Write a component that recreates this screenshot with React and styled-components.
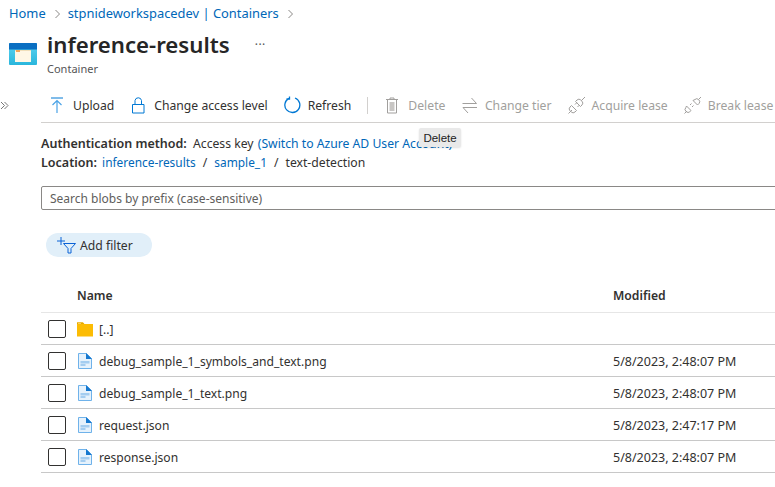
import React from "react";
import styled, { createGlobalStyle } from "styled-components";

const GlobalStyle = createGlobalStyle`
  html, body {
    margin: 0;
    padding: 0;
    background: #fff;
  }
  body {
    width: 775px;
    height: 487px;
    overflow: hidden;
    font-family: "Noto Sans", "Open Sans", sans-serif;
    color: #292827;
  }
`;

const Page = styled.div`
  position: relative;
  width: 775px;
  height: 487px;
  overflow: hidden;
`;

const Breadcrumb = styled.nav`
  display: flex;
  align-items: center;
  height: 26px;
  padding-left: 9px;
  font-size: 12.9px;
  color: #0067b8;
`;

const Crumb = styled.span`
  white-space: nowrap;
`;

const CrumbChevron = styled.svg`
  width: 8px;
  height: 10px;
  margin: 1px 6px 0 8px;
  fill: none;
  stroke: #8a8886;
  stroke-width: 1;
`;

const Header = styled.header`
  display: flex;
  height: 52px;
  padding-left: 9px;
`;

const TitleBlock = styled.div`
  margin-left: 10px;
  padding-top: 3px;
`;

const TitleRow = styled.div`
  display: flex;
  align-items: flex-start;
`;

const Title = styled.h1`
  margin: 0;
  font-size: 22.2px;
  line-height: 32px;
  font-weight: 600;
  color: #262626;
  white-space: nowrap;
`;

const More = styled.span`
  margin: 8px 0 0 25px;
  font-size: 12px;
  line-height: 16px;
  letter-spacing: 0.5px;
  color: #555;
`;

const Subtitle = styled.div`
  font-size: 11px;
  line-height: 15px;
  color: #555;
`;

const ContainerIcon = styled.svg`
  width: 28px;
  height: 22px;
  margin-top: 17px;
`;

const Body = styled.div`
  display: flex;
`;

const Rail = styled.div`
  width: 41px;
  flex: none;
  padding-top: 23px;
`;

const RailChevron = styled.svg`
  display: block;
  width: 9px;
  height: 9px;
  fill: none;
  stroke: #777;
  stroke-width: 1;
`;

const Main = styled.main`
  flex: 1;
  min-width: 0;
`;

const Toolbar = styled.div`
  display: flex;
  align-items: center;
  box-sizing: border-box;
  height: 45px;
  padding-top: 10px;
  border-bottom: 1px solid #d2d0ce;
  white-space: nowrap;
  overflow: hidden;
`;

const ToolButton = styled.div`
  display: flex;
  align-items: center;
  flex: none;
  margin-left: ${(p) => p.$gap}px;
  font-size: 12.2px;
  color: ${(p) => (p.$disabled ? "#a19f9d" : "#323130")};
`;

const ToolIcon = styled.svg`
  width: 18px;
  height: 18px;
  margin-right: 6px;
  fill: none;
  stroke: ${(p) => p.$color || "#0078d4"};
  stroke-width: 1;
`;

const ToolDivider = styled.div`
  width: 1px;
  height: 17px;
  margin-left: 16px;
  background: #d2d0ce;
`;

const Tooltip = styled.div`
  position: absolute;
  left: 419px;
  top: 128px;
  box-sizing: border-box;
  width: 42px;
  height: 19px;
  text-align: center;
  line-height: 20px;
  font-family: "Liberation Sans", sans-serif;
  font-size: 11.5px;
  color: #222;
  background: #e9e9e9;
  border-radius: 2px;
  box-shadow: 0 1px 2px rgba(0, 0, 0, 0.12);
`;

const InfoLine = styled.div`
  font-size: 12.2px;
  line-height: 19px;
  white-space: nowrap;
  color: #323130;
`;

const InfoBlock = styled.div`
  margin-top: 11px;
`;

const Label = styled.strong`
  font-size: 12.5px;
  font-weight: 600;
  margin-right: ${(p) => p.$gap}px;
`;

const Link = styled.span`
  color: #0067b8;
  font-size: ${(p) => p.$size || 12.2}px;
  margin-left: ${(p) => p.$indent || 0}px;
`;

const Slash = styled.span`
  margin: 0 7px;
`;

const SearchBox = styled.div`
  box-sizing: border-box;
  width: 740px;
  height: 24px;
  margin-top: 14px;
  padding-left: 8px;
  border: 1px solid #8a8886;
  border-radius: 2px;
  font-size: 12px;
  line-height: 24px;
  color: #605e5c;
  white-space: nowrap;
`;

const FilterPill = styled.div`
  display: inline-flex;
  align-items: center;
  box-sizing: border-box;
  width: 106px;
  height: 24px;
  margin: 23px 0 0 5px;
  padding-left: 11px;
  border-radius: 12px;
  background: #e1eff9;
  font-size: 12.2px;
  color: #323130;
`;

const FilterIcon = styled.svg`
  width: 20px;
  height: 20px;
  margin-right: 3px;
  fill: none;
  stroke: #0b62d6;
  stroke-width: 1;
`;

const Table = styled.div`
  margin-top: 20px;
`;

const HeadRow = styled.div`
  display: grid;
  grid-template-columns: 36px 536px 1fr;
  align-items: center;
  box-sizing: border-box;
  height: 33px;
  padding-bottom: 2px;
  border-bottom: 1px solid #e6e6e6;
  font-size: 12.2px;
  font-weight: 600;
  color: #323130;
`;

const Row = styled.div`
  display: grid;
  grid-template-columns: 36px 536px 1fr;
  align-items: center;
  height: 31px;
  border-bottom: 1px solid #c8c8c8;
  font-size: 12.1px;
  color: #323130;
`;

const CheckCell = styled.div`
  display: flex;
  padding-left: 7px;
`;

const CheckBox = styled.span`
  box-sizing: border-box;
  width: 18px;
  height: 18px;
  border: 1px solid #323130;
  border-radius: 2px;
`;

const NameCell = styled.div`
  display: flex;
  align-items: center;
  white-space: nowrap;
`;

const RowText = styled.span`
  padding-top: 1px;
`;

const DateText = styled.span`
  padding-top: 1px;
  font-size: 12.5px;
`;

const RowIcon = styled.svg`
  width: 16px;
  height: 16px;
  margin-right: 6px;
  flex: none;
`;

const FolderIcon = () => (
  <RowIcon viewBox="0 0 16 16">
    <path d="M0 1.500h6l1.500 1.500H16v12.500H0z" fill="#fcbc04" />
    <path d="M0 1.500h6L7 3H0z" fill="#e3a600" />
    <path d="M1 2h3v.7H1z" fill="#fde38a" />
  </RowIcon>
);

const FileIcon = () => (
  <RowIcon viewBox="0 0 16 16">
    <path d="M1.500.5h8l5 5v10h-13z" fill="#e6f2fc" stroke="#6fb2ea" />
    <path d="M9 0v6h6z" fill="#1678cf" />
    <path d="M3.500 8h9v2.500h-9z" fill="#a4cdf0" />
    <path d="M3.500 11h5v2h-5z" fill="#a4cdf0" />
  </RowIcon>
);

// lease icons: two plug halves, pulled apart a bit more on the break icon
const AcquireIcon = () => (
  <ToolIcon viewBox="0 0 18 18" $color="#a19f9d">
    <path d="M.5 17.500l3.500-3.500M3.500 9.500l5 5-1.500 1.500a2.800 2.800 0 0 1-3.800 0L2 14.800a2.800 2.800 0 0 1 0-3.800z" />
    <path d="M7 8.500l1.800-1.800M9.500 11l1.800-1.800M7.500 5.500l5 5 1.500-1.500a2.800 2.800 0 0 0 0-3.800L12.800 4a2.800 2.800 0 0 0-3.800 0z" />
    <path d="M13.500 4.500l3.500-3.500" />
  </ToolIcon>
);

const BreakIcon = () => (
  <ToolIcon viewBox="0 0 18 18" $color="#a19f9d">
    <path d="M.5 17.500l2.500-2.500M2.500 10l4.500 4.500-1.200 1.200a2.500 2.500 0 0 1-3.500 0l-.5-.5a2.500 2.500 0 0 1 0-3.500z" />
    <path d="M6 9l1.500-1.500M8 11l1.500-1.500M9 4.500l4.500 4.500 1.500-1.500a2.500 2.500 0 0 0 0-3.500l-.5-.5a2.500 2.500 0 0 0-3.500 0z" />
    <path d="M14.500 3.500L17 1" />
  </ToolIcon>
);

const ITEMS = [
  { name: "debug_sample_1_symbols_and_text.png", modified: "5/8/2023, 2:48:07 PM" },
  { name: "debug_sample_1_text.png", modified: "5/8/2023, 2:48:07 PM" },
  { name: "request.json", modified: "5/8/2023, 2:47:17 PM" },
  { name: "response.json", modified: "5/8/2023, 2:48:07 PM" },
];

export default function App() {
  return (
    <Page>
      <GlobalStyle />
      <Breadcrumb>
        <Crumb>Home</Crumb>
        <CrumbChevron viewBox="0 0 8 10">
          <path d="M1.500 1l4 4-4 4" />
        </CrumbChevron>
        <Crumb>stpnideworkspacedev | Containers</Crumb>
        <CrumbChevron viewBox="0 0 8 10">
          <path d="M1.500 1l4 4-4 4" />
        </CrumbChevron>
      </Breadcrumb>
      <Header>
        <ContainerIcon viewBox="0 0 28 22">
          <defs>
            <linearGradient id="containerBody" x1="0" y1="0" x2="0" y2="1">
              <stop offset="0" stopColor="#5cd3f0" />
              <stop offset="1" stopColor="#2ab6dc" />
            </linearGradient>
          </defs>
          <rect x="0" y="0" width="28" height="22" rx="1" fill="url(#containerBody)" />
          <path d="M0 1a1 1 0 0 1 1-1h26a1 1 0 0 1 1 1v5.500H0z" fill="#0a6fc2" />
          <rect x="6" y="7" width="16" height="12" fill="#fff7e6" />
          <rect x="6" y="7" width="16" height="1" fill="#f1dfba" />
          <rect x="7" y="7" width="4" height="2" fill="#f2a65a" />
        </ContainerIcon>
        <TitleBlock>
          <TitleRow>
            <Title>inference-results</Title>
            <More>···</More>
          </TitleRow>
          <Subtitle>Container</Subtitle>
        </TitleBlock>
      </Header>
      <Body>
        <Rail>
          <RailChevron viewBox="0 0 9 9">
            <path d="M1 1l3.500 3.500L1 8M4.500 1L8 4.500 4.500 8" />
          </RailChevron>
        </Rail>
        <Main>
          <Toolbar>
            <ToolButton $gap={8}>
              <ToolIcon viewBox="0 0 18 18">
                <path d="M2 2h12" />
                <path d="M8 17V4.500M3.500 9L8 4.500 12.500 9" stroke="#4ba3e6" strokeWidth="1.200" />
              </ToolIcon>
              Upload
            </ToolButton>
            <ToolButton $gap={16}>
              <ToolIcon viewBox="0 0 18 18">
                <path d="M2.500 8.500h11.500v8.500H2.500zM5 8.500V4.500a3.300 3.300 0 0 1 6.500 0v4" />
              </ToolIcon>
              Change access level
            </ToolButton>
            <ToolButton $gap={16}>
              <ToolIcon viewBox="0 0 18 18">
                <path d="M5 2.300A7.500 7.500 0 1 0 11 2M5.500 .5V3H2.500" strokeWidth="1.300" />
              </ToolIcon>
              Refresh
            </ToolButton>
            <ToolDivider />
            <ToolButton $gap={16} $disabled>
              <ToolIcon viewBox="0 0 18 18" $color="#a19f9d">
                <path d="M2 3.500h12M6 3.500V2h4v1.500M3.500 3.500V17h9V3.500" />
                <path d="M5.500 6h5v9h-5z" fill="#c8c6c4" stroke="none" />
              </ToolIcon>
              Delete
            </ToolButton>
            <ToolButton $gap={15.5} $disabled>
              <ToolIcon viewBox="0 0 18 18" $color="#a19f9d">
                <path d="M1.500 7.500h14l-5-5.500M16 11.500H2l5 5.500" />
              </ToolIcon>
              Change tier
            </ToolButton>
            <ToolButton $gap={16} $disabled>
              <AcquireIcon />
              Acquire lease
            </ToolButton>
            <ToolButton $gap={16} $disabled>
              <BreakIcon />
              Break lease
            </ToolButton>
          </Toolbar>
          <InfoBlock>
            <InfoLine>
              <Label $gap={3}>Authentication method:</Label> Access key <Link $indent={1}>(Switch to Azure AD User Account)</Link>
            </InfoLine>
            <InfoLine>
              <Label $gap={2}>Location:</Label> <Link $size={11.9}>inference-results</Link>
              <Slash>/</Slash>
              <Link $size={11.9}>sample_1</Link>
              <Slash>/</Slash>text-detection
            </InfoLine>
          </InfoBlock>
          <SearchBox>Search blobs by prefix (case-sensitive)</SearchBox>
          <FilterPill>
            <FilterIcon viewBox="0 0 20 20">
              <path d="M0 6h8M4 2v8M6.500 8.500h12l-4.500 5V18h-3v-4.500z" />
            </FilterIcon>
            Add filter
          </FilterPill>
          <Table>
            <HeadRow>
              <span />
              <span>Name</span>
              <span>Modified</span>
            </HeadRow>
            <Row>
              <CheckCell>
                <CheckBox />
              </CheckCell>
              <NameCell>
                <FolderIcon />
                <RowText>[..]</RowText>
              </NameCell>
              <span />
            </Row>
            {ITEMS.map((item) => (
              <Row key={item.name}>
                <CheckCell>
                  <CheckBox />
                </CheckCell>
                <NameCell>
                  <FileIcon />
                  <RowText>{item.name}</RowText>
                </NameCell>
                <DateText>{item.modified}</DateText>
              </Row>
            ))}
          </Table>
        </Main>
      </Body>
      <Tooltip>Delete</Tooltip>
    </Page>
  );
}
